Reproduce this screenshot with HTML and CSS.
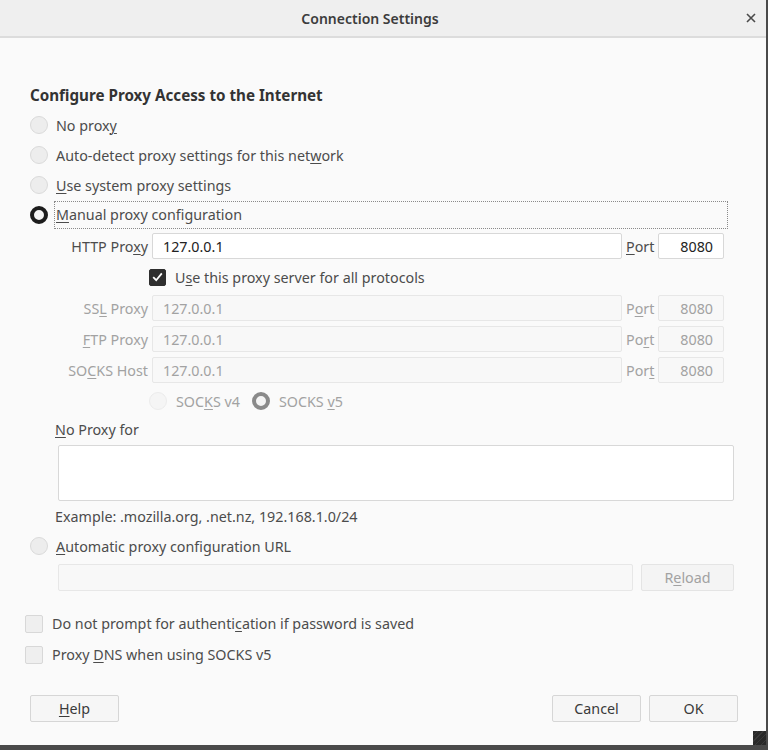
FILE: index.html
```html
<!DOCTYPE html>
<html>
<head>
<meta charset="utf-8">
<link rel="stylesheet" href="styles.css">
</head>
<body>
<div class="window">
  <div class="titlebar">
    <span class="title">Connection Settings</span>
    <span class="close">
      <svg width="10" height="10" viewBox="0 0 10 10"><path d="M1 1L9 9M9 1L1 9" stroke="#4a4a4a" stroke-width="1.6" fill="none"/></svg>
    </span>
  </div>
  <div class="content">
    <div class="heading">Configure Proxy Access to the Internet</div>
    <div class="row"><span class="radio"></span><span class="lbl">No prox<u>y</u></span></div>
    <div class="row"><span class="radio"></span><span class="lbl">Auto-detect proxy settings for this net<u>w</u>ork</span></div>
    <div class="row"><span class="radio"></span><span class="lbl"><u>U</u>se system proxy settings</span></div>
    <div class="row"><span class="radio on"></span><span class="lbl focus"><u>M</u>anual proxy configuration</span></div>

    <div class="proxygrid">
      <span class="plabel">HTTP Pro<u>x</u>y</span>
      <span class="input main">127.0.0.1</span>
      <span class="portlbl"><u>P</u>ort</span>
      <span class="input port">8080</span>

      <span class="check-row"><span class="check on"><svg width="11" height="10" viewBox="0 0 11 10"><path d="M1.2 5.2L4.2 8.2L9.8 1.4" stroke="#fff" stroke-width="1.8" fill="none"/></svg></span><span class="lbl">U<u>s</u>e this proxy server for all protocols</span></span>

      <span class="plabel dis">SS<u>L</u> Proxy</span>
      <span class="input main dis">127.0.0.1</span>
      <span class="portlbl dis">P<u>o</u>rt</span>
      <span class="input port dis">8080</span>

      <span class="plabel dis"><u>F</u>TP Proxy</span>
      <span class="input main dis">127.0.0.1</span>
      <span class="portlbl dis">Po<u>r</u>t</span>
      <span class="input port dis">8080</span>

      <span class="plabel dis">SO<u>C</u>KS Host</span>
      <span class="input main dis">127.0.0.1</span>
      <span class="portlbl dis">Por<u>t</u></span>
      <span class="input port dis">8080</span>

      <span class="socks-row">
        <span class="radio dis"></span><span class="lbl dis">SOC<u>K</u>S v4</span>
        <span class="radio on dis v5"></span><span class="lbl dis">SOCKS <u>v</u>5</span>
      </span>
    </div>

    <div class="noproxy-lbl"><u>N</u>o Proxy for</div>
    <div class="textarea"></div>
    <div class="example">Example: .mozilla.org, .net.nz, 192.168.1.0/24</div>
    <div class="row"><span class="radio"></span><span class="lbl"><u>A</u>utomatic proxy configuration URL</span></div>
    <div class="url-row">
      <span class="input url dis"></span>
      <span class="btn dis">R<u>e</u>load</span>
    </div>

    <div class="crow first"><span class="check"></span><span class="lbl">Do not prompt for authenti<u>c</u>ation if password is saved</span></div>
    <div class="crow"><span class="check"></span><span class="lbl">Proxy <u>D</u>NS when using SOCKS v5</span></div>

    <div class="buttons">
      <span class="btn"><u>H</u>elp</span>
      <span class="spacer"></span>
      <span class="btn">Cancel</span>
      <span class="btn">OK</span>
    </div>
    <span class="grip"></span>
  </div>
  <div class="bottom"></div>
</div>
</body>
</html>
```
FILE: styles.css
```css
* { box-sizing: border-box; }
html, body { margin: 0; padding: 0; }
body {
  width: 768px;
  height: 750px;
  overflow: hidden;
  background: #4a4a4a;
  font-family: "Noto Sans", "DejaVu Sans", sans-serif;
  font-size: 14.3px;
  color: #4c4c4c;
}
u { text-decoration: underline; text-underline-offset: 2px; text-decoration-thickness: 1px; }
.window {
  width: 766px;
  height: 745px;
  background: #fafafa;
  display: flex;
  flex-direction: column;
  position: relative;
}
.titlebar {
  height: 38px;
  flex: none;
  background: #efefef;
  border-bottom: 2px solid #dcdcdc;
  display: flex;
  align-items: center;
  justify-content: center;
  position: relative;
}
.title { font-weight: 600; color: #3c3c3c; font-size: 14px; margin-left: -26px; }
.close { position: absolute; right: 10px; top: 13px; width: 10px; height: 10px; display: flex; }
.content {
  flex: 1;
  position: relative;
  padding: 42px 0 0 0;
}
.heading {
  height: 30px;
  line-height: 30px;
  padding-left: 30px;
  font-weight: 700;
  font-size: 15.2px;
  color: #333;
}
.row {
  height: 30px;
  display: flex;
  align-items: center;
  padding-left: 30px;
}
.radio {
  width: 18px; height: 18px;
  border-radius: 50%;
  background: #ededed;
  border: 1px solid #dadada;
  flex: none;
  margin-right: 8px;
}
.radio.on {
  background: #f4f4f4;
  border: 4px solid #1c1c1c;
}
.radio.dis { background: #f5f5f5; border-color: #ececec; }
.radio.on.dis { background: #f4f4f4; border: 4px solid #8a8a8a; }
.lbl { white-space: nowrap; }
.lbl.focus {
  outline: 1px dotted #8a8a8a;
  width: 672px;
  height: 26px;
  line-height: 26px;
  margin-left: -1px;
  padding-left: 1px;
}
.proxygrid {
  margin: 3px 0 0 56px;
  display: grid;
  grid-template-columns: 92px 470px 28px 66px;
  column-gap: 4px;
  row-gap: 5px;
  grid-auto-rows: 26px;
  align-items: center;
}
.plabel { text-align: right; white-space: nowrap; }
.dis { color: #a2a2a2; }
.input {
  height: 26px;
  background: #fff;
  border: 1px solid #d8d8d8;
  border-radius: 2px;
  display: flex;
  align-items: center;
  color: #222;
}
.input.main { padding-left: 10px; }
.input.port { justify-content: flex-end; padding-right: 10px; }
.input.dis { background: #f8f8f8; border-color: #e7e7e7; color: #a2a2a2; }
.portlbl { white-space: nowrap; }
.check-row, .socks-row {
  grid-column: 2 / 5;
  margin-left: -3px;
  display: flex;
  align-items: center;
}
.check {
  width: 17px; height: 17px;
  border-radius: 2px;
  background: #efefef;
  border: 1px solid #d8d8d8;
  flex: none;
  margin-right: 9px;
  display: flex;
  align-items: center;
  justify-content: center;
}
.check.on { background: #2e2e2e; border-color: #2e2e2e; }
.socks-row .radio { margin-right: 9px; }
.socks-row .radio.v5 { margin-left: 12px; }
.noproxy-lbl {
  margin: 6px 0 0 55px;
  height: 20px;
  line-height: 20px;
}
.textarea {
  margin: 5px 0 0 58px;
  width: 676px;
  height: 56px;
  background: #fff;
  border: 1px solid #d8d8d8;
  border-radius: 2px;
}
.example {
  margin: 6px 0 0 55px;
  height: 20px;
  line-height: 20px;
}
.example + .row { margin-top: 4px; }
.url-row {
  margin: 3px 0 0 58px;
  display: flex;
  gap: 8px;
  width: 676px;
}
.input.url { width: 575px; height: 27px; }
.btn {
  height: 27px;
  border: 1px solid #d6d6d6;
  border-radius: 2px;
  background: #f6f6f6;
  display: flex;
  align-items: center;
  justify-content: center;
  color: #3a3a3a;
  width: 89px;
}
.btn.dis { color: #a2a2a2; background: #f4f4f4; border-color: #e4e4e4; width: 93px; }
.crow {
  height: 31px;
  display: flex;
  align-items: center;
  padding-left: 25px;
}
.crow .check { width: 18px; height: 18px; margin-right: 9px; }
.crow.first { margin-top: 17px; }
.buttons {
  margin: 25px 0 0 30px;
  width: 708px;
  display: flex;
  gap: 8px;
}
.spacer { flex: 1; }
.grip {
  position: absolute;
  right: 0;
  bottom: 0;
  width: 13px;
  height: 14px;
  background: #2a2a2a repeating-linear-gradient(135deg, #2a2a2a 0 3px, #3a3a3a 3px 4px);
}
.bottom {
  position: absolute;
  left: 0; right: -2px; bottom: -5px;
  height: 5px;
  background: #4a4a4a;
}
```
